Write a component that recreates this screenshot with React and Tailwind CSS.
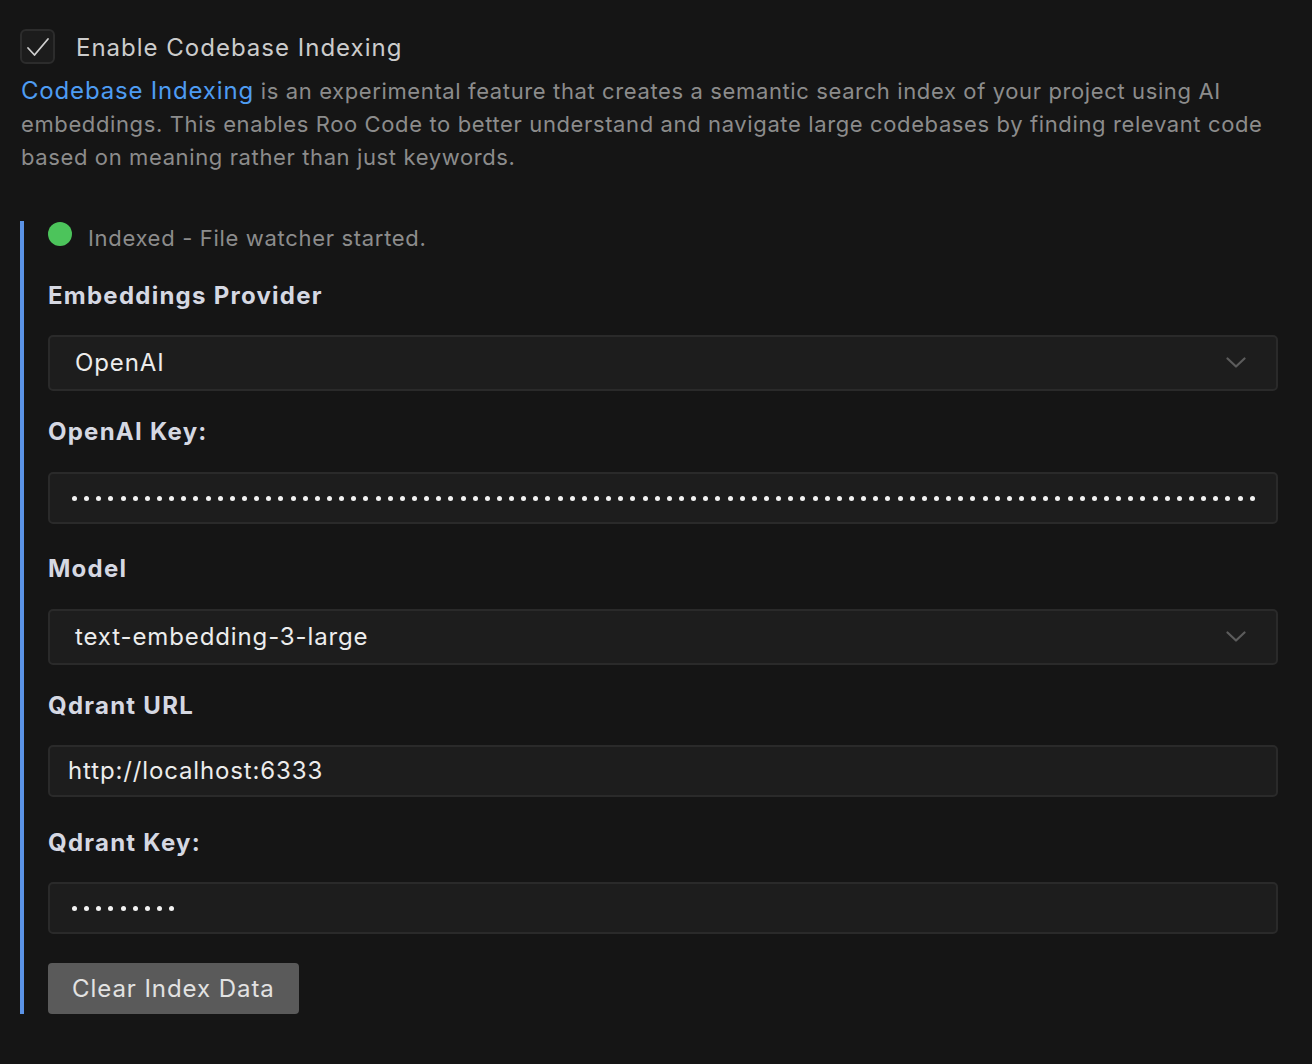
import React from 'react';

const font = { fontFamily: 'Inter, "Noto Sans", sans-serif' };

const Chevron = () => (
  <svg width="20" height="12" viewBox="0 0 20 12" fill="none" className="shrink-0">
    <path d="M1.5 1.5 L10 9.5 L18.5 1.5" stroke="#5c5c5c" strokeWidth="2.2" strokeLinecap="round" strokeLinejoin="round" />
  </svg>
);

const Dots = ({ count }) => (
  <div className="flex items-center gap-[7.15px]">
    {Array.from({ length: count }).map((_, i) => (
      <span key={i} className="block w-[5px] h-[5px] rounded-full bg-[#f2f2f2]" />
    ))}
  </div>
);

const Label = ({ children, className }) => (
  <div className={'text-[24px] leading-[30px] font-bold tracking-[1.25px] text-[#d5d8e2] ' + className}>{children}</div>
);

const Select = ({ value, className }) => (
  <div className={'h-[56px] w-full flex items-center justify-between pl-[25px] pr-[30px] bg-[#1d1d1d] border-2 border-[#2a2a2a] rounded-[5px] ' + className}>
    <span className="text-[24px] tracking-[0.88px] text-[#ececec]">{value}</span>
    <Chevron />
  </div>
);

const Input = ({ children, className }) => (
  <div className={'h-[52px] w-full flex items-center pl-[18px] bg-[#1d1d1d] border-2 border-[#2a2a2a] rounded-[5px] overflow-hidden ' + className}>
    {children}
  </div>
);

export default function App() {
  return (
    <div className="bg-[#151515] min-h-screen pl-[20px] pr-[34px] pt-[29px]" style={font}>
      <div className="flex items-center h-[35px]">
        <div className="w-[35px] h-[35px] rounded-[6px] bg-[#1c1c1c] border-2 border-[#2c2c2c] flex items-center justify-center">
          <svg width="26" height="22" viewBox="0 0 26 22" fill="none">
            <path d="M3 12 L9.5 19 L23 3" stroke="#cfcfcf" strokeWidth="1.8" strokeLinecap="round" strokeLinejoin="round" />
          </svg>
        </div>
        <span className="ml-[21px] mt-[3px] text-[24px] tracking-[1px] text-[#cccccc]">Enable Codebase Indexing</span>
      </div>

      <p className="mt-[10px] text-[22px] leading-[33px] tracking-[0.62px] text-[#8c8c8c] pl-[1px]">
        <span className="text-[24px] tracking-[0.82px] text-[#4e9cf2]">Codebase Indexing</span> is an experimental feature that creates a semantic search index of your project using AI embeddings. This enables Roo Code to better understand and navigate large codebases by finding relevant code based on meaning rather than just keywords.
      </p>

      <section className="mt-[47px] border-l-4 border-[#5b93e6] pl-[24px] flex flex-col">
        <div className="flex items-start">
          <span className="block mt-[1px] w-[24px] h-[24px] rounded-full bg-[#4cc45b]" />
          <span className="ml-[16px] mt-[4px] text-[22px] leading-[26px] tracking-[0.68px] text-[#8c8c8c]">Indexed - File watcher started.</span>
        </div>

        <Label className="mt-[30px]">Embeddings Provider</Label>
        <Select value="OpenAI" className="mt-[24px]" />

        <Label className="mt-[26px]">OpenAI Key:</Label>
        <Input className="mt-[25px] pl-[22px]">
          <Dots count={98} />
        </Input>

        <Label className="mt-[30px]">Model</Label>
        <Select value="text-embedding-3-large" className="mt-[25px]" />

        <Label className="mt-[26px]">Qdrant URL</Label>
        <Input className="mt-[24px]">
          <span className="text-[24px] tracking-[0.86px] text-[#ececec]">http://localhost:6333</span>
        </Input>

        <Label className="mt-[31px]">Qdrant Key:</Label>
        <Input className="mt-[24px] pl-[22px]">
          <Dots count={9} />
        </Input>

        <div className="mt-[29px]">
          <button className="h-[51px] px-[24px] bg-[#5a5a5a] rounded-[4px] text-[24px] tracking-[0.94px] text-[#e2e2e2]">Clear Index Data</button>
        </div>
      </section>
    </div>
  );
}
